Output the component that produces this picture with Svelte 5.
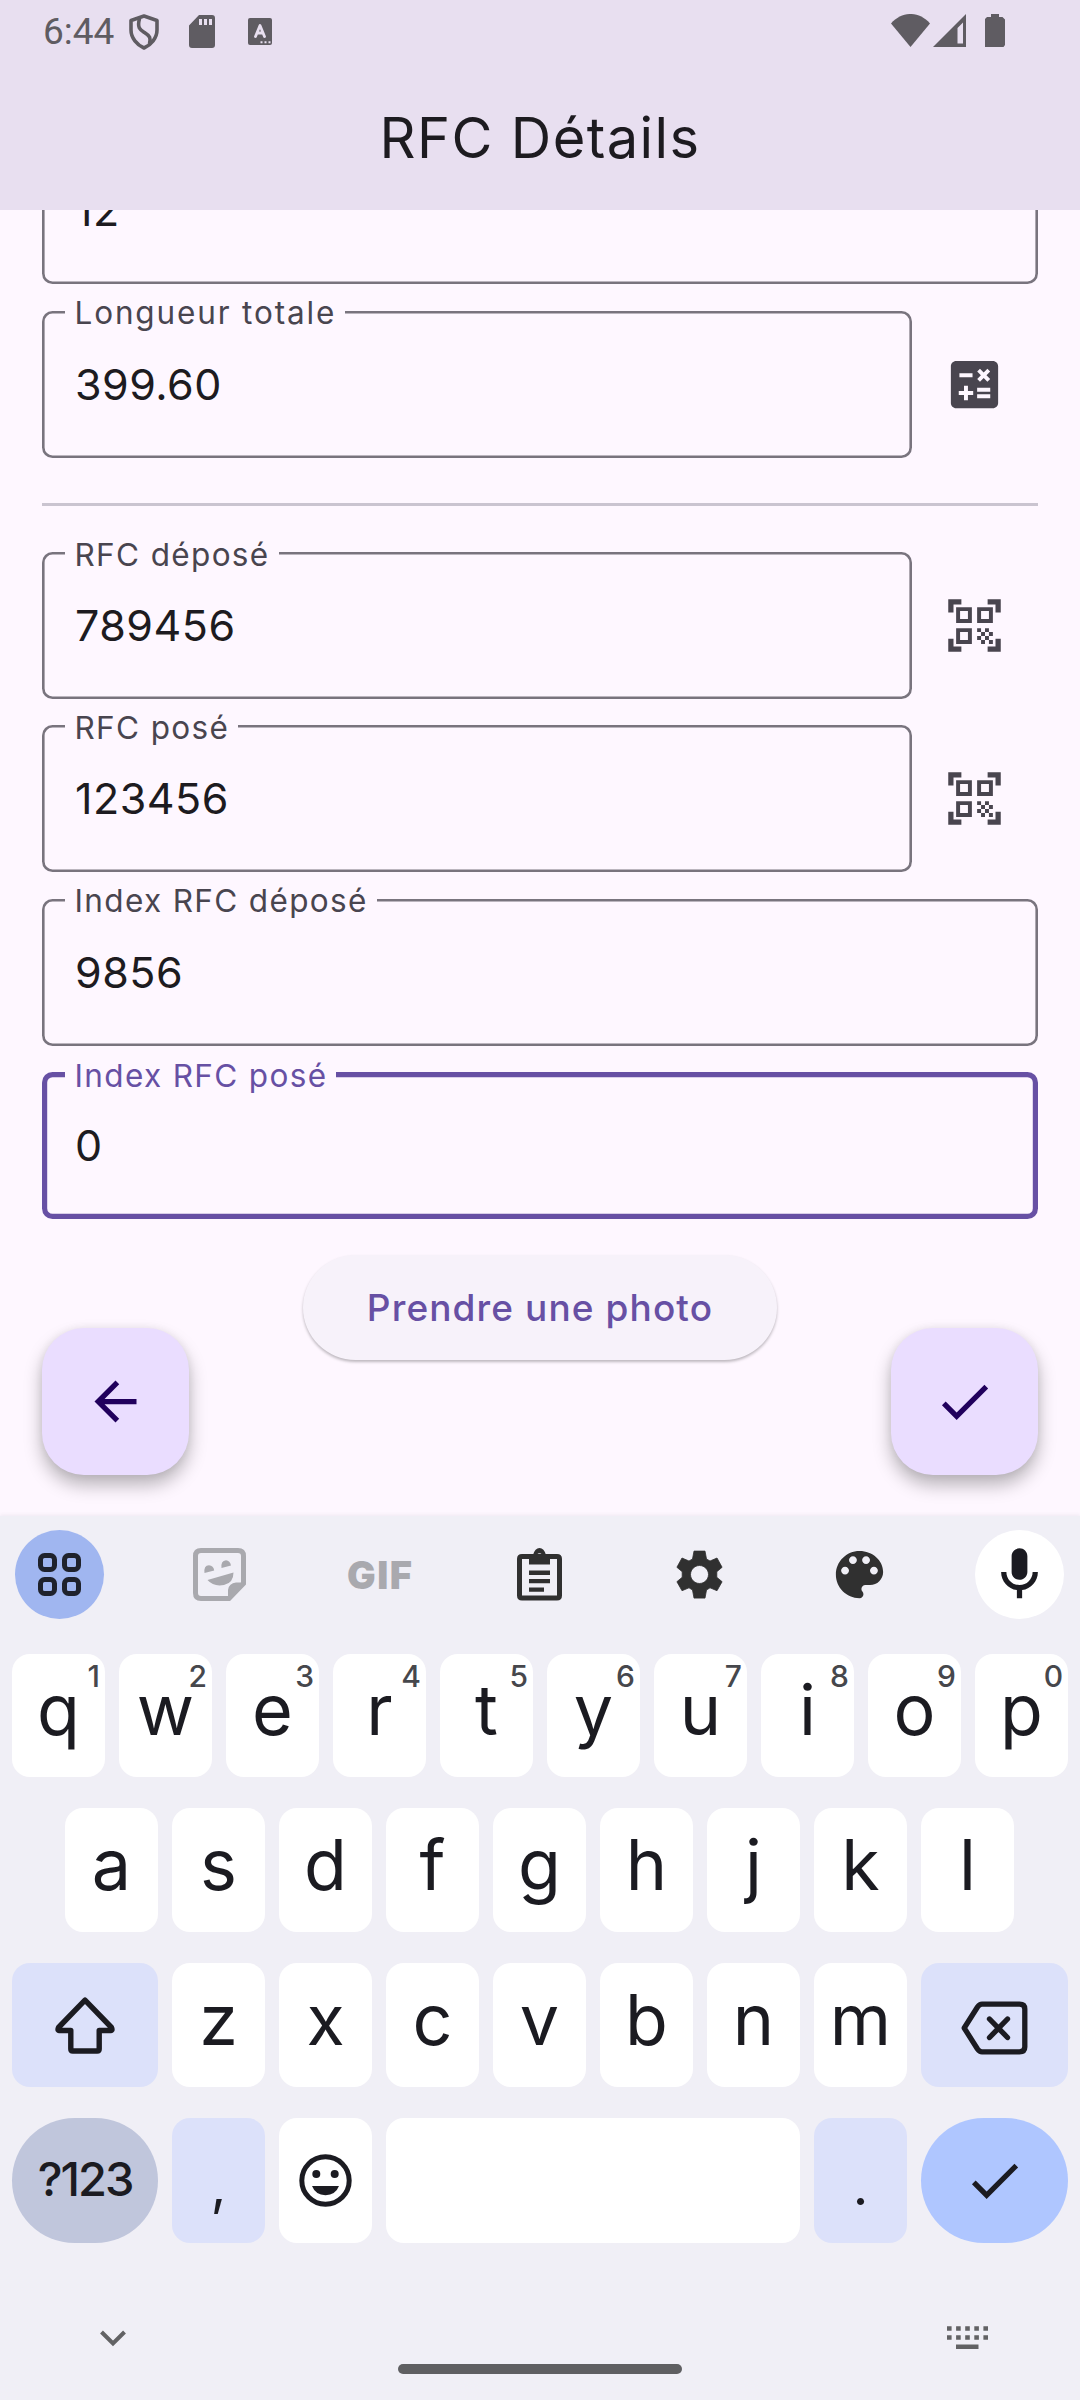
<script>
  const row1 = [...'qwertyuiop'].map((c, i) => ({ c, hint: String((i + 1) % 10) }));
  const row2 = [...'asdfghjkl'];
  const row3 = [...'zxcvbnm'];

  const icons = {
    calc: 'M19 3H5c-1.1 0-2 .9-2 2v14c0 1.1.9 2 2 2h14c1.1 0 2-.9 2-2V5c0-1.1-.9-2-2-2zm-5.97 4.06L14.09 6l1.41 1.41L16.91 6l1.06 1.06-1.41 1.41 1.41 1.41-1.06 1.06-1.41-1.4-1.41 1.41-1.06-1.06 1.41-1.41-1.41-1.42zm-6.78.66h5v1.5h-5v-1.5zM11.5 16h-2v2H8v-2H6v-1.5h2v-2h1.5v2h2V16zm6.5 1.25h-5v-1.5h5v1.5zm0-2.5h-5v-1.5h5v1.5z',
    qr: 'M9.5 6.5v3h-3v-3h3M11 5H5v6h6V5zm-1.5 9.5v3h-3v-3h3M11 13H5v6h6v-6zm6.5-6.5v3h-3v-3h3M19 5h-6v6h6V5zm-6 8h1.5v1.5H13V13zm1.5 1.5H16V16h-1.5v-1.5zM16 13h1.5v1.5H16V13zm-3 3h1.5v1.5H13V16zm1.5 1.5H16V19h-1.5v-1.5zM16 16h1.5v1.5H16V16zm1.5-1.5H19V16h-1.5v-1.5zm0 3H19V19h-1.5v-1.5zM22 7h-2V4h-3V2h5v5zm0 15v-5h-2v3h-3v2h5zM2 22h5v-2H4v-3H2v5zM2 2v5h2V4h3V2H2z',
    back: 'M20 11H7.83l5.59-5.59L12 4l-8 8 8 8 1.41-1.41L7.83 13H20v-2z',
    check: 'M9 16.17L4.83 12l-1.42 1.41L9 19 21 7l-1.41-1.41z',
    palette: 'M12 3c-4.97 0-9 4.03-9 9s4.03 9 9 9c.83 0 1.5-.67 1.5-1.5 0-.39-.15-.74-.39-1.01-.23-.26-.38-.61-.38-.99 0-.83.67-1.5 1.5-1.5H16c2.76 0 5-2.24 5-5 0-4.42-4.03-8-9-8zm-5.5 9c-.83 0-1.5-.67-1.5-1.5S5.67 9 6.5 9 8 9.67 8 10.5 7.33 12 6.5 12zm3-4C8.67 8 8 7.33 8 6.5S8.67 5 9.5 5s1.5.67 1.5 1.5S10.33 8 9.5 8zm5 0c-.83 0-1.5-.67-1.5-1.5S13.67 5 14.5 5s1.5.67 1.5 1.5S15.33 8 14.5 8zm3 4c-.83 0-1.5-.67-1.5-1.5S16.67 9 17.5 9s1.5.67 1.5 1.5-.67 1.5-1.5 1.5z',
    mic: 'M12 14c1.66 0 3-1.34 3-3V5c0-1.66-1.34-3-3-3S9 3.34 9 5v6c0 1.66 1.34 3 3 3zM17 11c0 2.76-2.24 5-5 5s-5-2.24-5-5H5c0 3.53 2.61 6.43 6 6.92V21h2v-3.08c3.39-.49 6-3.39 6-6.92h-2z'
  };

  const fields = [
    { value: '12' },
    { label: 'Longueur totale', value: '399.60', icon: 'calc', divider: true, loose: true },
    { label: 'RFC déposé', value: '789456', icon: 'qr' },
    { label: 'RFC posé', value: '123456', icon: 'qr' },
    { label: 'Index RFC déposé', value: '9856' },
    { label: 'Index RFC posé', value: '0', focused: true }
  ];
</script>

{#snippet icon(name)}
  <svg class="icon" viewBox="0 0 24 24"><path fill="currentColor" d={icons[name]} /></svg>
{/snippet}

<div class="screen">
  <header>
    <div class="status">
      <span class="time">6:44</span>
      <svg class="shield" width="30" height="36" viewBox="0 0 30 36" fill="none" stroke="currentColor" stroke-width="3.6" stroke-linejoin="round">
        <path d="M15 2 28 6.500V16C28 24 22 31 15 34 8 31 2 24 2 16V6.500Z" />
        <path d="M10.500 4.500C8 14 11 15.500 15.500 18.500 21 22 22 24 20.500 30" />
      </svg>
      <svg class="sd" width="26" height="33" viewBox="0 0 26 33">
        <path fill="currentColor" fill-rule="evenodd" d="M10 0H23Q26 0 26 3V30Q26 33 23 33H3Q0 33 0 30V10.500ZM10 4V10H13V4ZM15 4V10H18V4ZM20 4V10H23V4Z" />
      </svg>
      <svg class="abox" width="24" height="27" viewBox="0 0 24 27">
        <rect width="24" height="27" rx="2" fill="currentColor" />
        <path d="M7.500 18.500 12 7.500 16.500 18.500M9 15H15" fill="none" stroke="#e8dff0" stroke-width="2.800" stroke-linecap="round" stroke-linejoin="round" />
        <path d="M12.500 23.300h2v2h-2zm4 0h2v2h-2zm4 0h2v2h-2z" fill="#e8dff0" />
      </svg>
      <svg class="wifi" width="39" height="33" viewBox="0 0 39 33"><path fill="currentColor" d="M0 9.500C11-3.200 28-3.200 39 9.500L19.500 33Z" /></svg>
      <svg class="signal" width="33" height="33" viewBox="0 0 33 33"><path fill="currentColor" fill-rule="evenodd" d="M33 0V33H0ZM30 8.500 24.500 14V29.500H30Z" /></svg>
      <svg class="battery" width="20" height="33" viewBox="0 0 20 33"><path fill="currentColor" d="M6 0H14V3H17.500L20 5.500V31L18.500 33H0V5L2 3H6Z" /></svg>
    </div>
    <h1>RFC Détails</h1>
  </header>

  <main>
    <div class="form">
      {#each fields as f}
        <div class="row">
          <div class="field" class:focused={f.focused}>
            {#if f.label}<span class="label" class:loose={f.loose}>{f.label}</span>{/if}
            <span class="value">{f.value}</span>
          </div>
          {#if f.icon}<div class="action">{@render icon(f.icon)}</div>{/if}
        </div>
        {#if f.divider}<div class="divider"><hr /></div>{/if}
      {/each}
      <button class="photo">Prendre une photo</button>
    </div>
    <button class="fab left">{@render icon('back')}</button>
    <button class="fab right">{@render icon('check')}</button>
  </main>

  <section class="keyboard">
    <div class="tools">
      <div class="tool blue">
        <svg class="icon" viewBox="0 0 63 63" fill="none" stroke="#1f222c" stroke-width="5">
          <rect x="12.500" y="12.500" width="14" height="14" rx="4" /><rect x="36.500" y="12.500" width="14" height="14" rx="4" />
          <rect x="12.500" y="36.500" width="14" height="14" rx="4" /><rect x="36.500" y="36.500" width="14" height="14" rx="4" />
        </svg>
      </div>
      <div class="tool dim">
        <svg class="icon" viewBox="0 0 63 63">
          <path fill="none" stroke="currentColor" stroke-width="5" d="M13 7.500H50Q55.500 7.500 55.500 13V40.500L41 55.500H13Q7.500 55.500 7.500 50V13Q7.500 7.500 13 7.500Z" />
          <path fill="currentColor" d="M40 56V47Q41 40 48 39.500H57L43 56ZM16.500 30Q15.500 22.500 21 22.200 25.500 22.500 26.200 27.500ZM33.500 25Q32.500 18 38 17.200 42 17.500 43 22.500ZM19.500 37 45.500 29.500Q45.500 40 36 42 25.500 44 19.500 37Z" />
        </svg>
      </div>
      <div class="tool dim"><span class="gif">GIF</span></div>
      <div class="tool">
        <svg class="icon" viewBox="0 0 63 63">
          <path fill="none" stroke="currentColor" stroke-width="5" d="M14 13.500H49Q51.500 13.500 51.500 16V52.500Q51.500 55 49 55H14Q11.500 55 11.500 52.500V16Q11.500 13.500 14 13.500Z" />
          <path fill="currentColor" fill-rule="evenodd" d="M21 12H25Q27 5 31.500 5T38 12H42V21.500H21ZM31.500 10.200a2.800 2.800 0 1 0 .01 0Z" />
          <path fill="currentColor" d="M21 27.500H42V32H21ZM21 36H42V40.300H21ZM21 44.500H36V48.700H21Z" />
        </svg>
      </div>
      <div class="tool">
        <svg class="icon" viewBox="-31.5 -31.5 63 63">
          <path fill="currentColor" fill-rule="evenodd" stroke="currentColor" stroke-width=".8" stroke-linejoin="round" d="M-5.500-23.400H5.500L7-15.500 10.500-13.500 17.500-16.500 22.600-7.200 17.300-2.800V2.800L22.600 7.200 17.500 16.200 10.500 13.300 7 15.500 5.500 23.600H-5.500L-7 15.500-10.500 13.300-17.500 16.200-22.600 7.200-17.300 2.800V-2.800L-22.600-7.200-17.500-16.500-10.500-13.500-7-15.500ZM0-9A9 9 0 1 0 .01-9Z" />
        </svg>
      </div>
      <div class="tool">{@render icon('palette')}</div>
      <div class="tool white">{@render icon('mic')}</div>
    </div>

    <div class="keys">
      <div class="krow first">
        {#each row1 as k}
          <div class="key"><span>{k.c}</span><sup>{k.hint}</sup></div>
        {/each}
      </div>
      <div class="krow middle">
        {#each row2 as c}<div class="key"><span>{c}</span></div>{/each}
      </div>
      <div class="krow">
        <div class="key wide soft">
          <svg width="60" height="58" viewBox="0 0 60 58" fill="none" stroke="currentColor" stroke-width="5.400" stroke-linejoin="round">
            <path d="M30 4.200 3.500 31.500Q2 35 5 34.500H15.800V53Q15.800 55 17.800 55H42.200Q44.200 55 44.200 53V34.500H55Q58 35 56.500 31.500Z" />
          </svg>
        </div>
        {#each row3 as c}<div class="key"><span>{c}</span></div>{/each}
        <div class="key wide soft edge">
          <svg class="bksp" width="67" height="54" viewBox="0 0 67 54" fill="none" stroke="currentColor" stroke-width="5.300" stroke-linejoin="round" stroke-linecap="round">
            <path d="M3.200 27 16.500 6Q18.500 3.200 21 3.200H58.500Q63.800 3.200 63.800 8V46Q63.800 50.800 58.500 50.800H21Q18.500 50.800 16.500 48Z" />
            <path d="M28.500 18 46.500 36.500M46.500 18 28.500 36.500" />
          </svg>
        </div>
      </div>
      <div class="krow last">
        <div class="key wide sym"><span>?123</span></div>
        <div class="key soft punct"><span>,</span></div>
        <div class="key">
          <svg class="icon" viewBox="-31.5 -31.5 63 63">
            <circle r="23.700" fill="none" stroke="currentColor" stroke-width="5" />
            <circle cx="-9.200" cy="-6.500" r="4" fill="currentColor" /><circle cx="9.200" cy="-6.500" r="4" fill="currentColor" />
            <path fill="currentColor" d="M-13.500 5.500H13.500Q10 14.500 0 14.700-10 14.500-13.500 5.500Z" />
          </svg>
        </div>
        <div class="key space"></div>
        <div class="key soft punct"><span>.</span></div>
        <div class="key wide enter edge">{@render icon('check')}</div>
      </div>
    </div>

    <div class="nav">
      <svg width="26" height="17" viewBox="0 0 26 17"><path d="M1.500 2 13 13.500 24.500 2" fill="none" stroke="currentColor" stroke-width="4" /></svg>
      <svg class="kb" width="41" height="24" viewBox="0 0 41 24">
        <path d="M0 2.500H41M0 11.500H41" fill="none" stroke="currentColor" stroke-width="4.600" stroke-dasharray="4.600 4.500" />
        <path d="M9 18.500H31.500V23H9Z" fill="currentColor" />
      </svg>
    </div>
    <div class="pill"></div>
  </section>
</div>

<style>
  :global(body) { margin: 0; background: #fef7ff; }
  * { box-sizing: border-box; }
  .screen { width: 1080px; height: 2400px; display: flex; flex-direction: column; overflow: hidden; font-family: Inter, sans-serif; color: #1d1b20; background: #fef7ff; }
  svg { display: block; flex: none; }
  .icon { width: 63px; height: 63px; }
  button { border: 0; padding: 0; font-family: inherit; }

  header { height: 210px; flex: none; background: #e8dff0; position: relative; z-index: 1; }
  .status { height: 68px; padding: 14px 75px 0 43px; display: flex; align-items: flex-start; color: #5f5c62; }
  .time { font: 400 37px/37px Roboto, sans-serif; width: 86px; margin-top: -1px; }
  .sd { margin: 1px 0 0 30px; }
  .abox { margin: 4px 0 0 33px; }
  .wifi { margin-left: auto; }
  .signal { margin-left: 3px; }
  .battery { margin-left: 19px; }
  h1 { margin: 0; height: 142px; text-align: center; font-size: 56px; font-weight: 400; line-height: 141px; letter-spacing: 1.400px; }

  main { height: 1306px; flex: none; position: relative; overflow: hidden; }
  .form { margin-top: -72.750px; padding: 0 42px; display: flex; flex-direction: column; }
  .row { display: flex; height: 147px; margin-bottom: 26.250px; }
  .row:has(+ .divider) { margin-bottom: 0; }
  .field { flex: 1; position: relative; border-radius: 10.500px; box-shadow: inset 0 0 0 2.600px #79747e; }
  .value { display: block; padding-left: 33px; font-size: 43px; line-height: 147px; letter-spacing: .5px; }
  .label { position: absolute; left: 22.500px; top: -16.500px; padding: 0 9px 0 10px; background: #fef7ff; color: #49454f; font-size: 31.500px; line-height: 38px; letter-spacing: 1.350px; white-space: nowrap; }
  .loose { letter-spacing: 1.850px; }
  .focused { box-shadow: inset 0 0 0 5.200px #6750a4; }
  .focused .label { top: -15px; color: #6750a4; }
  .action { width: 126px; padding-right: .5px; display: flex; align-items: center; justify-content: center; color: #49454f; }
  .divider { height: 94.500px; display: flex; align-items: center; }
  hr { flex: 1; height: 2.600px; margin: 0; border: 0; background: #cac4d0; }
  .photo { align-self: center; width: 474px; height: 105px; margin-top: 10px; border-radius: 53px; background: #f7f2fa; color: #6750a4; font-size: 37px; font-weight: 500; line-height: 104px; letter-spacing: 1.100px; box-shadow: 0 2px 3px rgba(0, 0, 0, .26); white-space: nowrap; }
  .fab { position: absolute; bottom: 41px; width: 147px; height: 147px; border-radius: 42px; background: #eaddff; color: #21005d; display: flex; align-items: center; justify-content: center; box-shadow: 0 10px 18px rgba(0, 0, 0, .28), 0 0 8px rgba(0, 0, 0, .06); }
  .left { left: 42px; }
  .right { right: 42px; }

  .keyboard { flex: 1; position: relative; background: #f0eff6; box-shadow: 0 -1px 4px rgba(60, 60, 80, .08); color: #1b1b21; }
  .tools { height: 117px; padding: 0 16px 0 15px; display: flex; align-items: center; justify-content: space-between; color: #303030; }
  .tool { width: 89px; height: 89px; border-radius: 50%; display: flex; align-items: center; justify-content: center; }
  .blue { background: #a0b6f0; }
  .white { background: #fff; color: #1b1b21; }
  .dim { color: #a9a9ae; }
  .gif { font-size: 38px; font-weight: 900; line-height: 40px; letter-spacing: 1.500px; margin-right: -1.500px; }

  .keys { padding: 21px 12px 0; display: flex; flex-direction: column; gap: 31px; }
  .krow { height: 124px; display: flex; justify-content: center; gap: 14px; }
  .first { height: 123px; }
  .middle { padding-right: 1px; }
  .last { height: 125px; }
  .key { width: 93px; flex: none; position: relative; border-radius: 18px; background: #fff; display: flex; align-items: center; justify-content: center; font-size: 70px; font-weight: 400; line-height: 84px; }
  .key span { margin-top: -10px; }
  .first span { margin-top: -12px; }
  sup { position: absolute; top: 7px; right: 5px; font-size: 30px; font-weight: 500; line-height: 30px; color: #46474c; }
  .wide { width: 146px; }
  .edge { width: 147px; }
  .soft { background: #dce1fa; }
  .bksp { margin-top: 5px; }
  .sym { border-radius: 63px; background: #c0c6dc; font-size: 47px; font-weight: 500; letter-spacing: -2px; }
  .key.sym span { margin-top: -3px; }
  .punct { font-size: 54px; }
  .key.punct span { margin-top: 10px; }
  .space { width: 414px; }
  .enter { border-radius: 63px; background: #afc6ff; }

  .nav { margin-top: 83px; padding: 0 92px 0 100px; display: flex; align-items: center; justify-content: space-between; color: #626264; height: 24px; }
  .pill { width: 284px; height: 10px; margin: 14px auto 0; border-radius: 5px; background: #5f5f62; }
</style>
